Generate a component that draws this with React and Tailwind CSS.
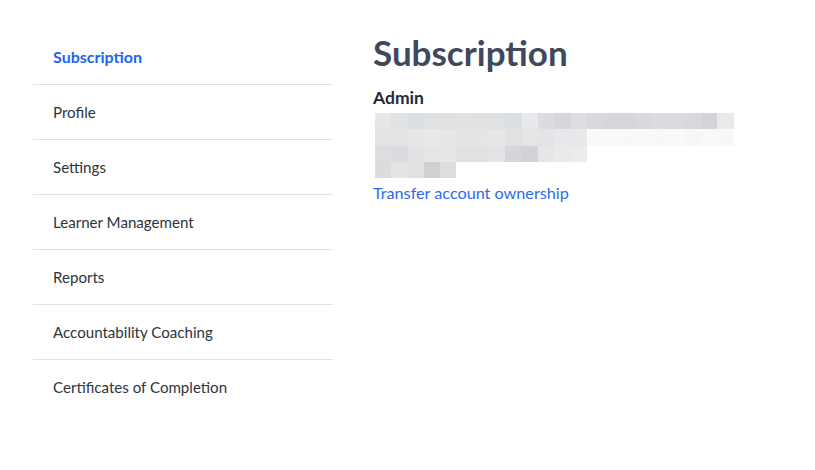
import React from "react";

const rows = [
  ["#e6e7e9","#e0e2e4","#dcdfe1","#dfe1e3","#dfe1e3","#e0e2e4","#dfe1e3","#dfe1e3","#dcdfe1","#e8e9eb","#dadcdf","#d5d7da","#dcdee1","#d7d9dc","#d5d7da","#d5d7da","#d7d9dc","#dadcdf","#d9dbde","#d7d9dc","#d2d4d7","#e9eaec"],
  ["#e2e3e5","#e3e4e6","#e5e6e8","#e8e9eb","#e6e7e9","#e3e4e6","#e4e5e7","#e6e7e9","#e1e2e4","#e4e5e7","#e3e4e6","#e7e8ea","#e8e9eb","#f8f9f9","#f8f9f9","#f7f8f8","#f9f9fa","#f7f8f8","#f8f9f9","#f6f7f7","#f8f9f9","#f7f8f8"],
  ["#dcdde0","#dadcdf","#e1e2e4","#e5e6e8","#e5e6e8","#e0e1e3","#e1e2e4","#e3e4e6","#d5d6d9","#d1d3d6","#e6e7e9","#e9eaec","#ebeced"],
  ["#dbdcdc","#e4e4e2","#e1e2df","#cfd1d0","#dcdddd"],
];

const items = [
  "Subscription",
  "Profile",
  "Settings",
  "Learner Management",
  "Reports",
  "Accountability Coaching",
  "Certificates of Completion",
];

export default function App() {
  return (
    <div
      className="w-[815px] h-[470px] bg-white flex pl-[33px] pt-[30px]"
      style={{ fontFamily: "Lato, 'Noto Sans', sans-serif" }}
    >
      <nav className="w-[300px] flex flex-col">
        {items.map((t, i) => (
          <div
            key={t}
            className={
              "h-[55px] flex items-center pl-5 " +
              (i < items.length - 1 ? "border-b border-[#dde1e8] " : "") +
              (i === 0 ? "text-[#1a66f0] font-bold text-[16px]" : "text-[#2d3440] text-[15.1px]")
            }
          >
            {t}
          </div>
        ))}
      </nav>
      <main className="ml-[40px] flex flex-col pt-[2px]">
        <h1 className="text-[35px] leading-[40px] font-bold text-[#3e4a5c]">Subscription</h1>
        <div className="mt-[16px] text-[17.5px] leading-[20px] font-bold text-[#1f2937]">Admin</div>
        <div className="mt-[5px] ml-[2px] flex flex-col">
          {rows.map((r, ri) => (
            <div key={ri} className="flex h-[16.25px]">
              {r.map((c, ci) => (
                <div key={ci} className="w-[16.3px] h-full" style={{ background: c }} />
              ))}
            </div>
          ))}
        </div>
        <a className="mt-[5px] text-[16.2px] leading-[20px] text-[#2d6bea]" href="#">
          Transfer account ownership
        </a>
      </main>
    </div>
  );
}
